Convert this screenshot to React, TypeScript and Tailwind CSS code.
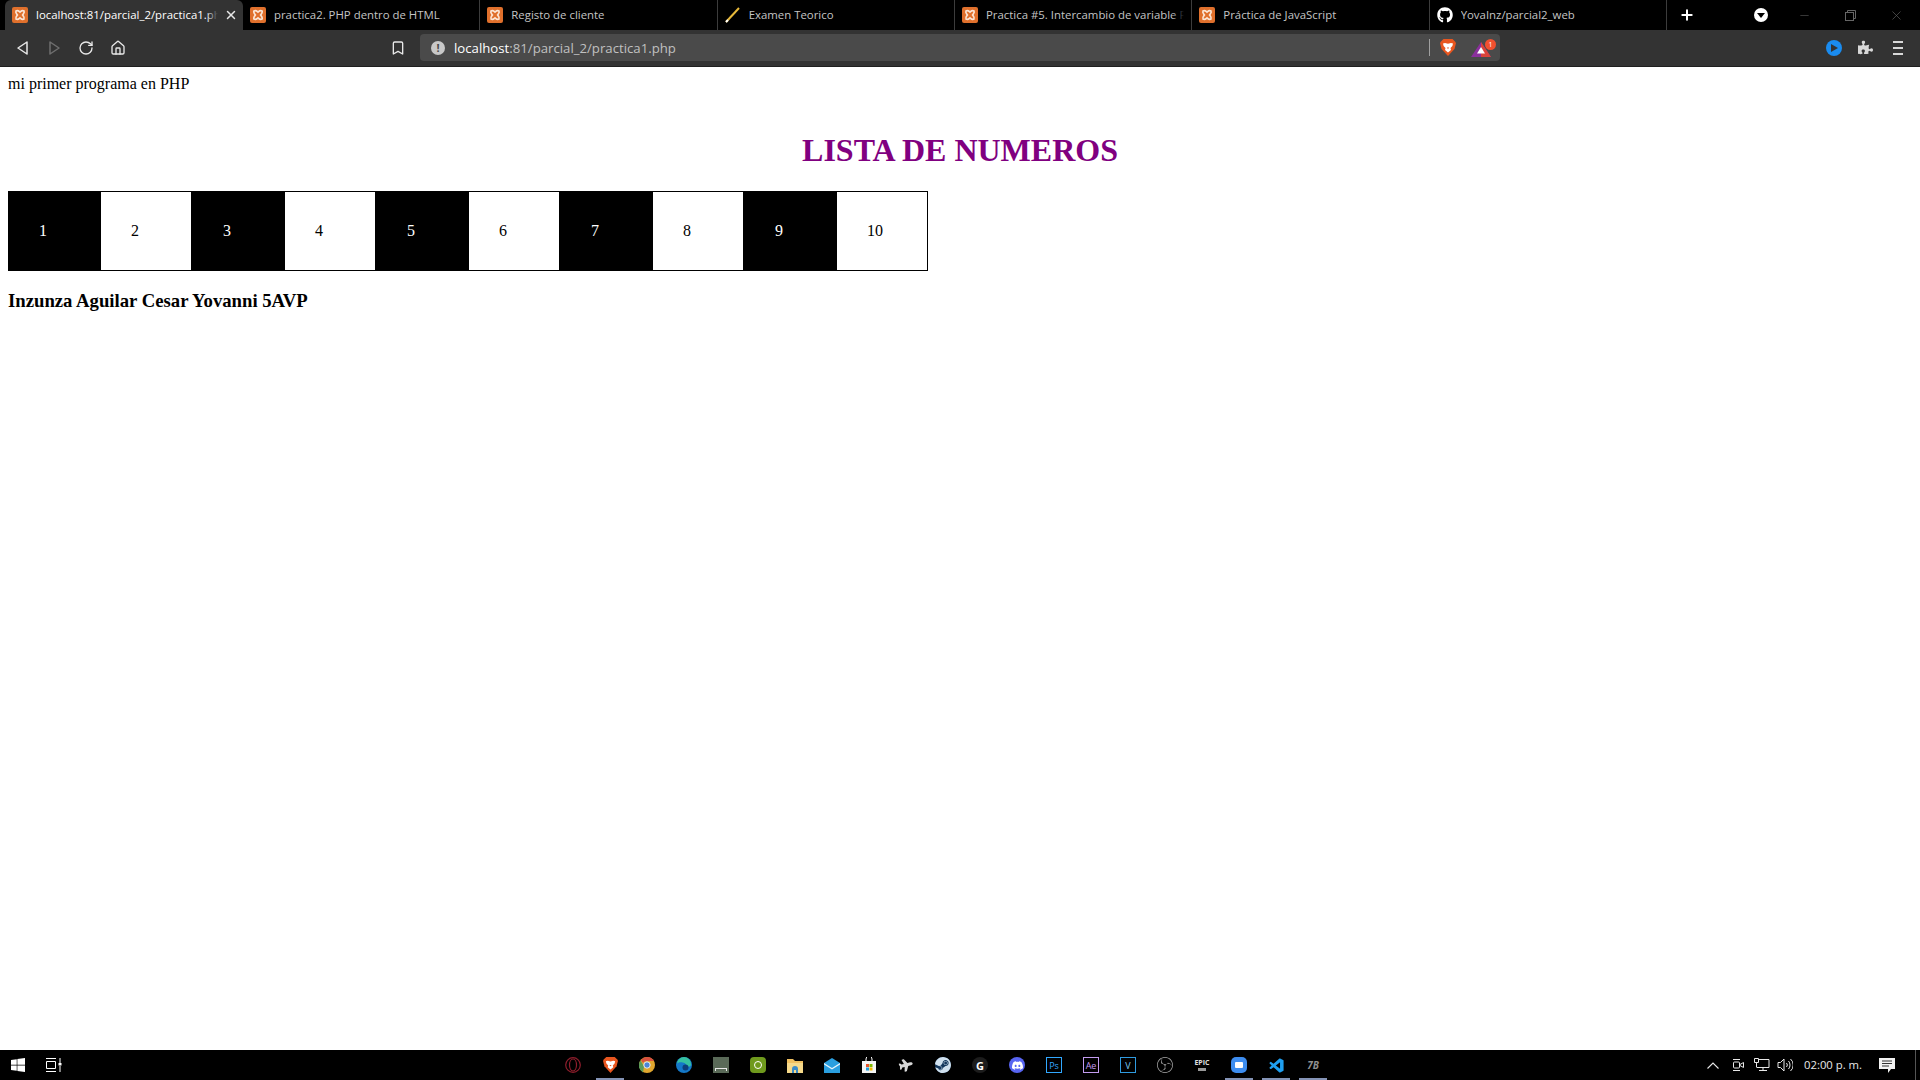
import { Bookmark, Home, RotateCw, Plus, X, Minus } from 'lucide-react';
import { FaGithub, FaWindows, FaPlane, FaPuzzlePiece } from 'react-icons/fa';
import { SiSteam, SiDiscord, SiObsstudio } from 'react-icons/si';
import { BiLogoVisualStudio } from 'react-icons/bi';

const uiFont = "font-['Open_Sans','Noto_Sans',sans-serif]";

// XAMPP favicon
function Xampp() {
  return (
    <svg width="16" height="16" viewBox="0 0 16 16" className="shrink-0">
      <rect width="16" height="16" rx="2" fill="#e0702c" />
      <path d="M4 4c2-1 2.600 0 4 1.200C9.400 4 10 3 12 4c.8 1.400-.2 2.400-1.400 4 1.200 1.600 2.200 2.600 1.400 4-2 1-2.600 0-4-1.200C6.600 12 6 13 4 12c-.8-1.400.2-2.400 1.400-4C4.200 6.400 3.200 5.400 4 4z" fill="none" stroke="#fbe6d6" strokeWidth="1.700" />
    </svg>
  );
}

function Pencil() {
  return (
    <svg width="16" height="16" viewBox="0 0 16 16" className="shrink-0">
      <path d="M1 15 L14 1" stroke="#e8b93a" strokeWidth="2" />
      <path d="M1 15 L3 13" stroke="#fff" strokeWidth="2" />
    </svg>
  );
}

function BraveLion({ size }: { size: number }) {
  return (
    <svg width={size} height={size * 1.060} viewBox="0 0 16 17">
      <path d="M3.500 0h9L15 2.500 16 4l-1.500 6L8 17 1.500 10 0 4l1-1.500z" fill="#e8561f" />
      <path d="M3 4.500 5 4l3 .8L11 4l2 .5-.6 2.500L10.500 9l.5 2L8 13.500 5 11l.5-2L3.600 7z" fill="#fff" />
      <path d="M6.800 8.500h2.400L8 10z" fill="#e8561f" />
    </svg>
  );
}

function Tab({ title, active, icon, fade }: { title: string; active?: boolean; icon: React.ReactNode; fade?: boolean }) {
  return (
    <div
      className={`relative flex items-center h-full ${active ? 'w-[238px] bg-[#333333] rounded-t-md pl-[7px] text-white' : 'w-[237.33px] pl-[7px] text-[#c4c4c4] border-r border-[#3c3c3c]'}`}
    >
      {icon}
      <div className={`relative ml-[8px] overflow-hidden whitespace-nowrap text-[11.4px] leading-[16px] ${active ? 'w-[182px]' : 'w-[198px]'}`}>
        {title}
        {fade && <div className={`absolute inset-y-0 right-0 w-3 bg-gradient-to-r from-transparent ${active ? 'to-[#333333]' : 'to-black'}`} />}
      </div>
      {active && <X size={14} strokeWidth={2.500} className="ml-[6px] text-[#e6e6e6]" />}
    </div>
  );
}

function TabBar() {
  return (
    <div className={`flex items-stretch h-[30px] bg-black pl-[5px] ${uiFont}`}>
      <Tab active title="localhost:81/parcial_2/practica1.php" icon={<Xampp />} fade />
      <Tab title="practica2. PHP dentro de HTML" icon={<Xampp />} />
      <Tab title="Registo de cliente" icon={<Xampp />} />
      <Tab title="Examen Teorico" icon={<Pencil />} />
      <Tab title="Practica #5. Intercambio de variable PHP" icon={<Xampp />} fade />
      <Tab title="Práctica de JavaScript" icon={<Xampp />} />
      <Tab title="YovaInz/parcial2_web" icon={<FaGithub size={16} className="text-white shrink-0" />} />
      <div className="flex items-center">
        <Plus size={16} strokeWidth={3} className="ml-[12px] text-white" />
        <div className="ml-[59px] flex size-[14px] items-center justify-center rounded-full bg-white">
          <div className="border-x-[4px] border-t-[5px] border-x-transparent border-t-black" />
        </div>
        <Minus size={13} strokeWidth={1} className="ml-[30px] text-[#666666]" />
        <svg width="11" height="11" viewBox="0 0 11 11" fill="none" stroke="#666666" className="ml-[34px]">
          <rect x="0.500" y="2.500" width="8" height="8" />
          <path d="M2.500 2.500v-2h8v8h-2" />
        </svg>
        <X size={15} strokeWidth={1} className="ml-[33px] text-[#666666]" />
      </div>
    </div>
  );
}

function Toolbar() {
  return (
    <div className={`flex items-center h-[37px] bg-[#333333] pl-[15px] pb-px border-b border-[#1f1f1f] ${uiFont}`}>
      <svg width="14" height="16" viewBox="0 0 14 16" fill="none" stroke="#e8e8e8" strokeWidth="1.500" strokeLinejoin="round">
        <path d="M12 2 3 8l9 6z" />
      </svg>
      <svg width="14" height="16" viewBox="0 0 14 16" fill="none" stroke="#6f6f6f" strokeWidth="1.500" strokeLinejoin="round" className="ml-[19px]">
        <path d="M2 2l9 6-9 6z" />
      </svg>
      <RotateCw size={16} strokeWidth={2} className="ml-[16px] text-[#e8e8e8]" />
      <Home size={16} strokeWidth={2} className="ml-[16px] text-[#e8e8e8]" />
      <Bookmark size={16} strokeWidth={2} className="ml-[264px] text-[#e8e8e8]" />
      <div className="ml-[14px] flex items-center h-[27px] w-[1080px] rounded bg-[#4a4a4a] pl-[11px]">
        <div className="flex size-[14px] items-center justify-center rounded-full bg-[#c8c8c8] text-[11px] font-bold leading-none text-[#4a4a4a]">!</div>
        <div className="ml-[9px] w-[975px] text-[13.2px] leading-[18px] text-[#c0c0c0]">
          <span className="text-white">localhost</span>:81/parcial_2/practica1.php
        </div>
        <div className="h-[17px] w-px bg-[#a0a0a0]" />
        <div className="ml-[10px] flex">
          <BraveLion size={16} />
        </div>
        <div className="relative ml-[15px] mt-[3px]">
          <svg width="20" height="15" viewBox="0 0 20 15" className="block">
            <path d="M10 0l10 15H0z" fill="#8a2f9c" />
            <path d="M10 0l10 15H10z" fill="#d9433a" />
            <path d="M10 5l4 6.500H6z" fill="#fff" />
          </svg>
          <div className="absolute -top-[3px] -right-[5px] flex size-[11px] items-center justify-center rounded-full bg-[#f1502f] text-[7px] leading-none text-white">1</div>
        </div>
      </div>
      <div className="ml-[326px] flex size-[16px] items-center justify-center rounded-full bg-[#1a8cf0]">
        <div className="border-y-[4px] border-l-[7px] border-y-transparent border-l-[#333333]" />
      </div>
      <FaPuzzlePiece size={15} className="ml-[16px] text-[#d8d8d8]" />
      <div className="ml-[20px] flex w-[10px] flex-col gap-[4px]">
        <div className="h-[2px] bg-[#d8d8d8]" />
        <div className="h-[2px] bg-[#d8d8d8]" />
        <div className="h-[2px] bg-[#d8d8d8]" />
      </div>
    </div>
  );
}

const cells = [
  { n: 1, cls: 'w-[92px] pl-[30px] bg-black text-white' },
  { n: 2, cls: 'w-[90px] pl-[30px] bg-white text-black' },
  { n: 3, cls: 'w-[94px] pl-[32px] bg-black text-white' },
  { n: 4, cls: 'w-[90px] pl-[30px] bg-white text-black' },
  { n: 5, cls: 'w-[94px] pl-[32px] bg-black text-white' },
  { n: 6, cls: 'w-[90px] pl-[30px] bg-white text-black' },
  { n: 7, cls: 'w-[94px] pl-[32px] bg-black text-white' },
  { n: 8, cls: 'w-[90px] pl-[30px] bg-white text-black' },
  { n: 9, cls: 'w-[94px] pl-[32px] bg-black text-white' },
  { n: 10, cls: 'w-[90px] pl-[30px] bg-white text-black' },
];

function Page() {
  return (
    <div className="flex-1 bg-white p-2 font-['Liberation_Serif','Times_New_Roman',serif] text-[16px] leading-[18px] text-black">
      <p>mi primer programa en PHP</p>
      <h1 className="mt-[38.5px] mb-[22px] text-center text-[32px] font-bold leading-[37px] text-[#800080]">LISTA DE NUMEROS</h1>
      <div className="flex h-[80px] w-[920px] border border-black">
        {cells.map((c) => (
          <div key={c.n} className={`flex items-center ${c.cls}`}>
            {c.n}
          </div>
        ))}
      </div>
      <h3 className="mt-[19px] text-[18.720px] font-bold leading-[21px]">Inzunza Aguilar Cesar Yovanni 5AVP</h3>
    </div>
  );
}

// slot in the taskbar, running apps get the underline
function Slot({ children, running }: { children: React.ReactNode; running?: boolean }) {
  return (
    <div className="relative flex h-[30px] w-[37px] items-center justify-center">
      {children}
      {running && <div className="absolute bottom-0 left-[4px] h-[2px] w-[28px] bg-[#8493b5]" />}
    </div>
  );
}

function Chrome() {
  return (
    <svg width="16" height="16" viewBox="0 0 16 16">
      <circle cx="8" cy="8" r="8" fill="#e0a62e" />
      <path d="M8 0a8 8 0 0 1 7 4H8a4 4 0 0 0-4 2L2 3a8 8 0 0 1 6-3z" fill="#d8503f" />
      <path d="M1.500 3.500 5 9.500l-1 6a8 8 0 0 1-2.500-12z" fill="#5b9a58" />
      <circle cx="8" cy="8" r="3.200" fill="#4a86d8" stroke="#eee" />
    </svg>
  );
}

function Edge() {
  return (
    <svg width="16" height="16" viewBox="0 0 16 16">
      <circle cx="8" cy="8" r="8" fill="#1478c8" />
      <path d="M1 7a7 7 0 0 1 14 0c.500 3-4 3.500-4.500 1.500C10 5 2 4 1 7z" fill="#35c1a0" />
      <circle cx="9.500" cy="10.500" r="3" fill="#0c3f7a" />
    </svg>
  );
}

function AdobeTile({ label, color }: { label: string; color: string }) {
  return (
    <div className={`flex size-[16px] items-center justify-center border text-[9px] leading-none ${color}`}>{label}</div>
  );
}

function Taskbar() {
  return (
    <div className={`relative flex h-[30px] items-center bg-black ${uiFont}`}>
      <FaWindows size={16} className="ml-[10px] text-white" />
      <svg width="17" height="14" viewBox="0 0 17 14" fill="none" stroke="#fff" className="ml-[19px]">
        <path d="M1 .5h10M1 13.500h10M1.500 3.500h9v7h-9zM15 0v5M15 8v6" />
        <rect x="13.500" y="5" width="3" height="2.500" fill="#fff" stroke="none" />
      </svg>

      <div className="ml-[492.5px] flex items-center">
        <Slot>
          <svg width="16" height="16" viewBox="0 0 16 16" fill="none" stroke="#8e1e2c" strokeWidth="1.200">
            <circle cx="8" cy="8" r="7.300" />
            <ellipse cx="8" cy="8" rx="3.500" ry="6" />
          </svg>
        </Slot>
        <Slot running><BraveLion size={15} /></Slot>
        <Slot><Chrome /></Slot>
        <Slot><Edge /></Slot>
        <Slot>
          <div className="flex size-[16px] items-end justify-center bg-[#5a6a58] pb-[2px]">
            <div className="h-[3px] w-[12px] border-x border-t border-[#e8e8e8]" />
          </div>
        </Slot>
        <Slot>
          <div className="flex size-[16px] items-center justify-center rounded-sm bg-[#6f9a1d]">
            <div className="size-[8px] rounded-full border border-white" />
          </div>
        </Slot>
        <Slot>
          <svg width="16" height="15" viewBox="0 0 16 15">
            <path d="M0 1h6l2 2h8v12H0z" fill="#f0c060" />
            <path d="M0 5h16v10H0z" fill="#f6d98a" />
            <path d="M5 15v-4a3 3 0 0 1 6 0v4H9v-3H7v3z" fill="#3a8bc8" />
          </svg>
        </Slot>
        <Slot>
          <svg width="16" height="15" viewBox="0 0 16 15">
            <path d="M0 5l8-5 8 5v10H0z" fill="#2a9fe0" />
            <path d="M0 5l8 5 8-5v1.500l-8 5-8-5z" fill="#e8f4fc" />
          </svg>
        </Slot>
        <Slot>
          <svg width="16" height="16" viewBox="0 0 16 16">
            <path d="M1 4h14v12H1z" fill="#f4f4f4" />
            <path d="M5 4V2a3 3 0 0 1 6 0v2" fill="none" stroke="#f4f4f4" />
            <rect x="5" y="7" width="3" height="3" fill="#e8532a" />
            <rect x="8.500" y="7" width="3" height="3" fill="#7fba00" />
            <rect x="5" y="10.500" width="3" height="3" fill="#1a9ee0" />
            <rect x="8.500" y="10.500" width="3" height="3" fill="#f2b700" />
          </svg>
        </Slot>
        <Slot><FaPlane size={14} className="-rotate-[15deg] text-[#d8d8d8]" /></Slot>
        <Slot>
          <div className="rounded-full bg-[#12365c]">
            <SiSteam size={16} className="text-[#cfe0ee]" />
          </div>
        </Slot>
        <Slot>
          <div className="flex size-[16px] items-center justify-center rounded-full bg-[#1c1c1c] text-[11px] font-bold leading-none text-white">G</div>
        </Slot>
        <Slot>
          <div className="flex size-[16px] items-center justify-center rounded-full bg-[#5865f2]">
            <SiDiscord size={11} className="text-white" />
          </div>
        </Slot>
        <Slot><AdobeTile label="Ps" color="border-[#31a8ff] text-[#31a8ff]" /></Slot>
        <Slot><AdobeTile label="Ae" color="border-[#c39cf0] text-[#c39cf0]" /></Slot>
        <Slot><AdobeTile label="V" color="border-[#2f9be0] text-[#7cc8f4]" /></Slot>
        <Slot><SiObsstudio size={16} className="text-[#a8a8a8]" /></Slot>
        <Slot>
          <div className="text-center text-[7px] font-bold leading-[7px] text-[#e0e0e0]">
            EPIC
            <div className="mx-auto mt-[2px] h-[3px] w-[8px] bg-[#999999]" />
          </div>
        </Slot>
        <Slot running>
          <div className="flex size-[16px] items-center justify-center rounded-[5px] bg-[#3d8df0]">
            <div className="h-[6px] w-[8px] rounded-[1px] bg-white" />
          </div>
        </Slot>
        <Slot running><BiLogoVisualStudio size={17} className="text-[#1f9ff0]" /></Slot>
        <Slot running><span className="text-[10px] font-bold italic leading-none text-[#8f8f8f]">7B</span></Slot>
      </div>

      <div className="ml-auto flex items-center text-[#e8e8e8]">
        <svg width="12" height="7" viewBox="0 0 12 7" fill="none" stroke="#e8e8e8" strokeWidth="1.100">
          <path d="M.5 6.500 6 1l5.500 5.500" />
        </svg>
        <svg width="12" height="16" viewBox="0 0 12 16" fill="none" stroke="#e8e8e8" className="ml-[13px]">
          <path d="M1 2.500h7M1 13.500h7" />
          <rect x="1.500" y="5" width="6" height="6" rx="1" />
          <path d="M8 7.500l3.500-2v5l-3.500-2" />
        </svg>
        <svg width="16" height="14" viewBox="0 0 16 14" fill="none" stroke="#e8e8e8" className="ml-[10px]">
          <path d="M5 1.500h10v8H3M9 9.500v3M5 12.500h8M.5.500h4v4h-4zM2.500 4.500v5" />
        </svg>
        <svg width="16" height="14" viewBox="0 0 16 14" fill="none" stroke="#e8e8e8" className="ml-[7px]">
          <path d="M1 4.500h2.500L7 1v12L3.500 9.500H1zM9.500 5a3 3 0 0 1 0 4M11.500 3a6 6 0 0 1 0 8M13.500 1a8 8 0 0 1 0 12" />
        </svg>
        <div className="ml-[11px] w-[60px] whitespace-nowrap text-[11.3px] leading-none">02:00 p. m.</div>
        <svg width="16" height="15" viewBox="0 0 16 15" className="ml-[15px]">
          <path d="M0 0h16v11h-4l-3 4v-4H0z" fill="#f2f2f2" />
          <path d="M3 3h10M3 5.500h10M3 8h7" stroke="#333333" />
        </svg>
        <div className="ml-[20px] mr-[4px] h-[30px] w-px bg-[#555555]" />
      </div>
    </div>
  );
}

export default function App() {
  return (
    <div className="flex h-[1080px] w-[1920px] flex-col overflow-hidden">
      <TabBar />
      <Toolbar />
      <Page />
      <Taskbar />
    </div>
  );
}
